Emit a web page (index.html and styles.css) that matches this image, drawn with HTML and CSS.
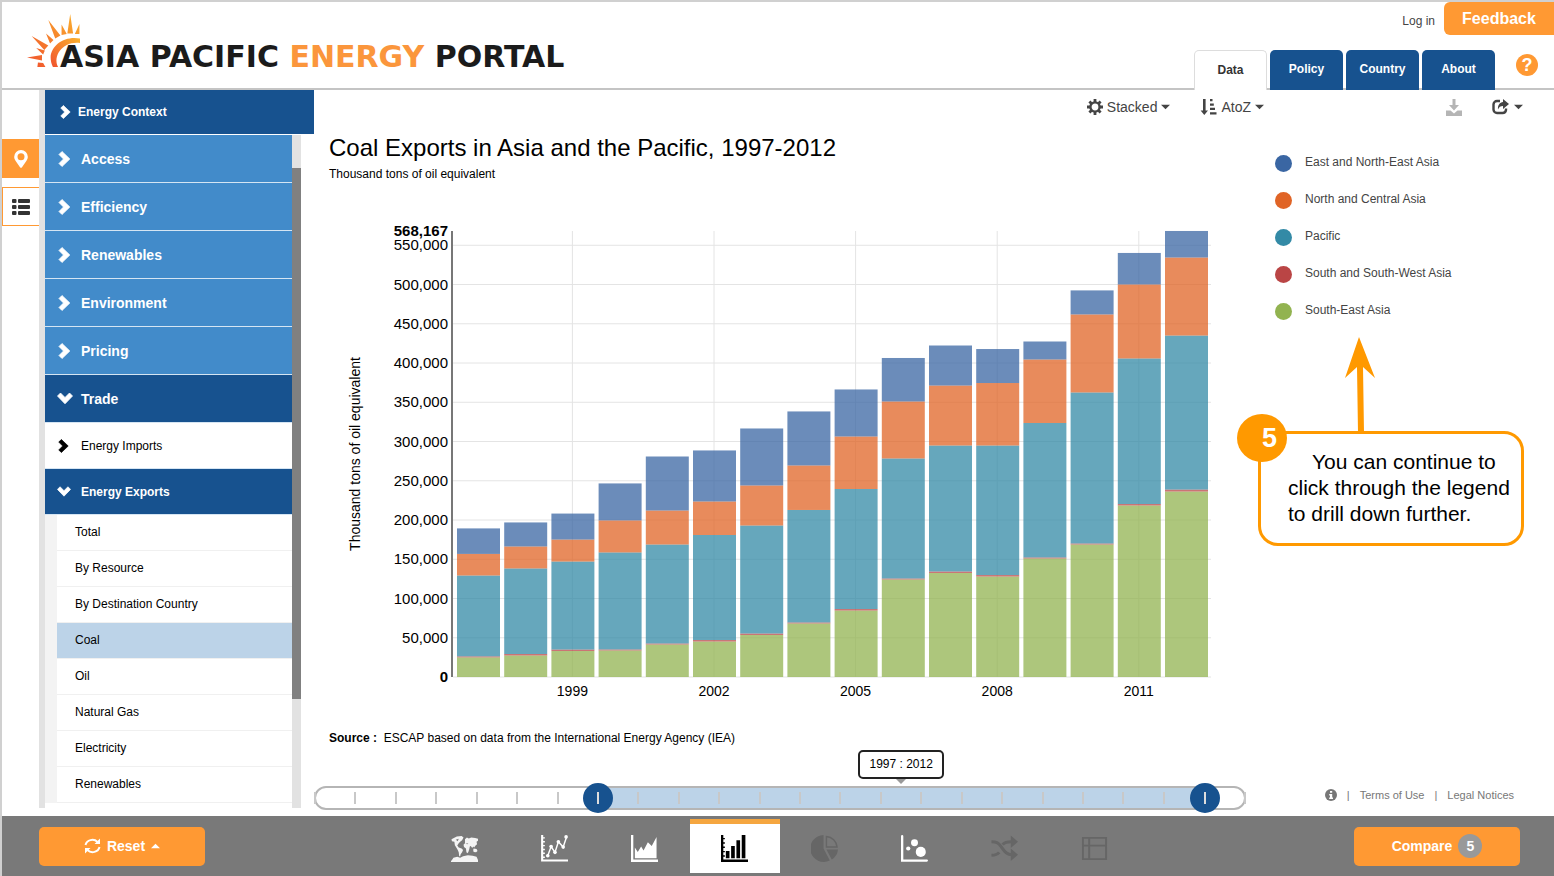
FILE: index.html
```html
<!DOCTYPE html>
<html lang="en">
<head>
    <meta charset="UTF-8">
    <meta name="viewport" content="width=device-width, initial-scale=1.0">
    <title>Asia Pacific Energy Portal</title>
    <link rel="stylesheet" href="styles.css">
</head>
<body>
    <!-- Shared icons -->
    <svg class="sprite" aria-hidden="true">
        <symbol id="chevron" viewBox="0 0 16 16">
            <path d="M2 3.5 5 .5 12.8 8 5 15.5 2 12.5 6.5 8z" fill="currentColor" stroke="currentColor" stroke-width=".8"/>
        </symbol>
        <symbol id="caret" viewBox="0 0 10 6">
            <path d="M0 .5h10L5 5.5z" fill="currentColor"/>
        </symbol>
    </svg>

    <header class="header">
        <a class="logo" href="#">
            <svg class="logo-sun" viewBox="0 0 46 54" preserveAspectRatio="none" aria-hidden="true">
                <defs>
                    <linearGradient id="sun" x1="0" y1="1" x2="1" y2="0">
                        <stop offset="0" stop-color="#f0512d"/>
                        <stop offset="1" stop-color="#fbb22d"/>
                    </linearGradient>
                </defs>
                <g fill="url(#sun)">
                    <path d="M37.500 0 40 19.500h-5zM45.500 10v10L41.500 20zM30 10.500l4.500 9.500-4.500 1zM18.500 6l10.500 15.500-4.500 3zM16.500 19.500 23 26l-3 3.500zM4 22l14.500 9.500-3.500 4.500zM8 34l7.500 2.500-1.500 4zM0 43.500l13-2.500v5.500zM9.500 48.500l4.500.500 2 4H9z"/>
                    <path d="M46 24.500C33 21.500 21 31 20.500 43c0 4 .8 7 2 10h4.500C22 42 31 27 46 29z"/>
                </g>
            </svg>
            <span class="logo-text">ASIA PACIFIC <b>ENERGY</b> PORTAL</span>
        </a>
        <div class="header-right">
            <div class="account">
                <a href="#">Log in</a>
                <button class="feedback">Feedback</button>
            </div>
            <div class="nav-row">
                <nav class="tabs">
                    <a class="active" href="#">Data</a>
                    <a href="#">Policy</a>
                    <a href="#">Country</a>
                    <a href="#">About</a>
                </nav>
                <button class="help" aria-label="Help">?</button>
            </div>
        </div>
    </header>

    <main class="main">
        <div class="rail">
            <button class="rail-btn on" aria-label="Map">
                <svg width="14" height="18" viewBox="0 0 14 18"><path fill="#fff" fill-rule="evenodd" d="M7 0a6.800 6.800 0 0 1 6.800 6.800c0 1.600-.6 2.800-1.300 4L8 17.200c-.5.700-1.500.7-2 0L1.500 10.800C.8 9.600.2 8.400.2 6.800A6.800 6.800 0 0 1 7 0zm0 3.300a3.500 3.500 0 1 0 0 7 3.500 3.500 0 0 0 0-7z"/></svg>
            </button>
            <button class="rail-btn" aria-label="List">
                <svg width="18" height="16" viewBox="0 0 18 16" fill="#333"><rect width="4.500" height="4" rx="1"/><rect x="6" width="12" height="4" rx="1"/><rect y="6" width="4.500" height="4" rx="1"/><rect x="6" y="6" width="12" height="4" rx="1"/><rect y="12" width="4.500" height="4" rx="1"/><rect x="6" y="12" width="12" height="4" rx="1"/></svg>
            </button>
        </div>

        <aside class="sidebar">
            <a class="context" href="#"><svg class="chev"><use href="#chevron"/></svg>Energy Context</a>
            <div class="menu-wrap">
                <nav class="menu">
                    <a class="item" href="#"><svg class="chev"><use href="#chevron"/></svg>Access</a>
                    <a class="item" href="#"><svg class="chev"><use href="#chevron"/></svg>Efficiency</a>
                    <a class="item" href="#"><svg class="chev"><use href="#chevron"/></svg>Renewables</a>
                    <a class="item" href="#"><svg class="chev"><use href="#chevron"/></svg>Environment</a>
                    <a class="item" href="#"><svg class="chev"><use href="#chevron"/></svg>Pricing</a>
                    <a class="item open" href="#"><svg class="chev"><use href="#chevron"/></svg>Trade</a>
                    <a class="item sub" href="#"><svg class="chev"><use href="#chevron"/></svg>Energy Imports</a>
                    <a class="item sub open" href="#"><svg class="chev"><use href="#chevron"/></svg>Energy Exports</a>
                    <ul class="leaves">
                        <li><a href="#">Total</a></li>
                        <li><a href="#">By Resource</a></li>
                        <li><a href="#">By Destination Country</a></li>
                        <li><a class="selected" href="#">Coal</a></li>
                        <li><a href="#">Oil</a></li>
                        <li><a href="#">Natural Gas</a></li>
                        <li><a href="#">Electricity</a></li>
                        <li><a href="#">Renewables</a></li>
                    </ul>
                </nav>
                <div class="scroll"><div class="thumb"></div></div>
            </div>
        </aside>

        <section class="content">
            <div class="toolbar">
                <button class="tool">
                    <svg width="16" height="16" viewBox="0 0 16 16"><circle cx="8" cy="8" r="4.600" fill="none" stroke="#444" stroke-width="2.400"/><path d="M8 0v3M8 13v3M0 8h3M13 8h3M2.400 2.400l2 2M11.600 11.600l2 2M13.600 2.400l-2 2M4.400 11.600l-2 2" stroke="#444" stroke-width="2.800"/></svg>
                    Stacked
                    <svg class="caret"><use href="#caret"/></svg>
                </button>
                <button class="tool sort">
                    <svg width="17" height="16" viewBox="0 0 17 16" fill="#444"><path d="M3 0h2.600v11.500H8L4.300 16 .6 11.500H3zM10 0h2.500v2.300H10zM10 4.400h3.800v2.300H10zM10 8.800h5v2.300h-5zM10 13.200h6.500v2.300H10z"/></svg>
                    AtoZ
                    <svg class="caret"><use href="#caret"/></svg>
                </button>
                <button class="tool" aria-label="Download">
                    <svg width="16" height="17" viewBox="0 0 16 17"><path fill="#b5b5b5" d="M6.500 0h3v6H13l-5 5.500L3 6h3.500zM0 11.500h4.500L8 14.500l3.500-3H16V17H0z"/></svg>
                </button>
                <button class="tool" aria-label="Share">
                    <svg width="18" height="16" viewBox="0 0 18 16"><path d="M8 2H5a3.500 3.500 0 0 0-3.500 3.500v5A3.500 3.500 0 0 0 5 14h5.500a3.500 3.500 0 0 0 3.500-3V9.500" fill="none" stroke="#444" stroke-width="2.400"/><path d="M11 0l6 5-6 5V7C8.500 7 7 8 6 10.500 5.500 6 8 3.300 11 3z" fill="#444"/></svg>
                    <svg class="caret"><use href="#caret"/></svg>
                </button>
            </div>

            <div class="columns">
                <div class="chart-col">
                    <h1>Coal Exports in Asia and the Pacific, 1997-2012</h1>
                    <p class="unit">Thousand tons of oil equivalent</p>
                    <svg class="chart" id="chart" viewBox="0 0 900 490" role="img" aria-label="Coal exports by subregion"></svg>
                    <p class="source"><b>Source :</b>&nbsp; ESCAP based on data from the International Energy Agency (IEA)</p>
                    <div class="slider">
                        <div class="track"><div class="range"></div></div>
                        <div class="ticks" id="ticks"></div>
                        <output class="bubble">1997 : 2012</output>
                        <input type="range" min="1990" max="2013" value="1997" aria-label="From year">
                        <input type="range" min="1990" max="2013" value="2012" aria-label="To year">
                    </div>
                </div>

                <div class="side-col">
                    <ul class="legend">
                        <li><button><i class="dot east"></i>East and North-East Asia</button></li>
                        <li><button><i class="dot north"></i>North and Central Asia</button></li>
                        <li><button><i class="dot pacific"></i>Pacific</button></li>
                        <li><button><i class="dot south"></i>South and South-West Asia</button></li>
                        <li><button><i class="dot southeast"></i>South-East Asia</button></li>
                    </ul>
                    <div class="callout">
                        <svg class="arrow" width="32" height="96" viewBox="0 0 32 96"><path d="M15 0l16 41-12-11 1 66h-6l-1-66L1 41z" fill="#f90"/></svg>
                        <span class="step">5</span>
                        <p>You can continue to click through the legend to drill down further.</p>
                    </div>
                    <div class="links">
                        <svg width="12" height="12" viewBox="0 0 12 12"><circle cx="6" cy="6" r="6" fill="#777"/><path d="M5 2h2.200v1.800H5zM4.200 5h3v3.500H8V10H4.200V8.500H5v-2h-.8z" fill="#fff"/></svg>
                        <span>|</span>
                        <a href="#">Terms of Use</a>
                        <span>|</span>
                        <a href="#">Legal Notices</a>
                    </div>
                </div>
            </div>
        </section>
    </main>

    <footer class="footer">
        <button class="action">
            <svg width="17" height="16" viewBox="0 0 17 16" fill="none" stroke="#fff" stroke-width="2"><path d="M1.500 7A7 6.500 0 0 1 13.500 4M15.500 9A7 6.500 0 0 1 3.500 12"/><path d="M16 .5V6h-5.500zM1 15.500V10h5.500z" fill="#fff" stroke="none"/></svg>
            Reset
            <svg class="caret up"><use href="#caret"/></svg>
        </button>
        <div class="views">
            <button aria-label="Map">
                <svg viewBox="0 0 28 28" fill="#f4f4f4"><path d="M.5 4.500 4 2.500l2-1L11 1l2 1.500-1.500 3L9.500 7 8 8.500 6.500 11l1.500 2 3 1 1.500 1.500-1 2.500-1.500 2-.5 2H8.500L8 18l-1-2.500L5.500 13 4 10.500 3.500 7 1 6.500zM14.500 4.500l2-2 2 1 2.500-1 4 .500 3 1v2l-1.500 1 .5 2.500-1.500 1.500-1.500 2-1-1-1 1.500-1.500-2-1 .5-.500 2.500-1 3L17 19l-1-1-.5-4-2-1.500-.5-2.500 1.500-1.500zM23.500 14l3 .500 1 2-1.500 1.500-2.500-.500-.5-2zM1 26l1.500-2.500 4-1 3 1 3-1.500 5-1 5 .500 4 1L28 26v2H0v-1z"/><path d="M5 5l3-1-1 2.500zM15 9l3-.500-1 1z" fill="#797979"/></svg>
            </button>
            <button aria-label="Line chart">
                <svg viewBox="0 0 28 28" fill="none" stroke="#fff"><path d="M1.200 0v26.500H28" stroke-width="2.200"/><path d="M2 3h2M2 7h2M2 11h2M2 15h2M2 19h2M2 23h2" stroke-width="1.500"/><path d="M7 21.500 10.500 12l4 6L18 7l5 5.500L26.500 2" stroke-width="1.500"/><g fill="#fff" stroke="none"><circle cx="7" cy="21.500" r="1.900"/><circle cx="10.500" cy="12" r="1.900"/><circle cx="14.500" cy="18" r="1.900"/><circle cx="18" cy="7" r="1.900"/><circle cx="23" cy="12.500" r="1.900"/><circle cx="26" cy="2" r="1.900"/></g></svg>
            </button>
            <button aria-label="Area chart">
                <svg viewBox="0 0 28 28" fill="#fff"><path d="M0 0h2.400v25.400H28V28H0z"/><path d="M4 13l3 4.500L10.500 12l2.500 4L17.500 7.500l4 4L26.500 2v22H4z"/></svg>
            </button>
            <button class="active" aria-label="Bar chart">
                <svg viewBox="0 0 28 28"><path d="M0 0h2.400v25.400H28V28H0zM5 16.500h3.800V24H5zM10.500 11.500h3.800V24h-3.800zM16 5.500h3.800V24H16zM21.500 0h3.800v24h-3.800zM2 3h2v1.500H2zM2 7.500h2V9H2zM2 12h2v1.500H2zM2 16.500h2V18H2zM2 21h2v1.500H2z"/></svg>
            </button>
            <button aria-label="Pie chart">
                <svg viewBox="0 0 28 28" fill="#666"><path d="M13 0v14l6.500 12.500A14 14 0 1 1 13 0zM16 15h12a14 14 0 0 1-6.500 10.500z"/><path d="M16 1.500V12.500h11A12 12 0 0 0 16 1.500z" fill="none" stroke="#666" stroke-width="1.500"/></svg>
            </button>
            <button aria-label="Bubble chart">
                <svg viewBox="0 0 28 28" fill="#fff"><path d="M1.200 1.200v25.300h25.600" fill="none" stroke="#fff" stroke-width="2.400" stroke-linecap="round"/><circle cx="14" cy="8" r="3.600"/><circle cx="7.500" cy="14" r="2.200"/><circle cx="20.500" cy="17.500" r="5.200"/></svg>
            </button>
            <button aria-label="Flow chart">
                <svg viewBox="0 0 28 28" fill="none" stroke="#666" stroke-width="3.200"><path d="M.5 7c5 0 7 1 10 5s5 8.500 11.500 8.500M.5 21c3.500 0 6-.5 8-3M12 10c2-2.500 4.500-3 9.500-3"/><path d="M20.500.500 28 7l-7.500 6.500zM20.500 14 28 20.500 20.500 27z" fill="#666" stroke="none"/></svg>
            </button>
            <button aria-label="Table">
                <svg viewBox="0 0 28 28" fill="none" stroke="#666" stroke-width="2"><path d="M2 3h24v22H2zM8.500 3v22M2 11h24"/></svg>
            </button>
        </div>
        <button class="action">Compare <span class="count">5</span></button>
    </footer>

    <script src="chart.js"></script>
</body>
</html>
```
FILE: styles.css
```css
* {
    box-sizing: border-box;
}
body {
    margin: 0;
    height: 100vh;
    display: flex;
    flex-direction: column;
    border-top: 2px solid #d0d0d0;
    border-left: 2px solid #d0d0d0;
    background: #fff;
    color: #000;
    font-family: "Liberation Sans", Arial, sans-serif;
    font-size: 12px;
    overflow: hidden;
}
a {
    color: inherit;
    text-decoration: none;
}
button {
    padding: 0;
    border: 0;
    background: none;
    font: inherit;
    color: inherit;
    cursor: pointer;
}
ul {
    list-style: none;
    margin: 0;
    padding: 0;
}
.sprite {
    position: absolute;
    width: 0;
    height: 0;
}

/* Header */
.header {
    display: flex;
    justify-content: space-between;
    flex: none;
    height: 88px;
    border-bottom: 2px solid #c4c4c4;
}
.logo {
    display: flex;
    align-items: flex-end;
    padding: 0 0 20px 25px;
}
.logo-sun {
    width: 53px;
    height: 54px;
}
.logo-text {
    margin-left: -20px;
    font-family: "DejaVu Sans", sans-serif;
    font-size: 30px;
    font-weight: bold;
    line-height: 22px;
    color: #1b1b1b;
    white-space: nowrap;
}
.logo-text b {
    color: #fb963c;
}
.header-right {
    display: flex;
    flex-direction: column;
    justify-content: space-between;
    align-items: flex-end;
}
.account {
    display: flex;
    align-items: center;
    gap: 9px;
    color: #444;
}
.account a {
    padding-top: 5px;
}
.feedback {
    width: 110px;
    height: 33px;
    border-radius: 6px 0 0 6px;
    background: #ff9933;
    color: #fff;
    font-size: 16px;
    font-weight: bold;
}
.nav-row {
    display: flex;
    align-items: center;
    gap: 21px;
    padding-right: 16px;
    margin-bottom: -2px;
}
.tabs {
    display: flex;
    gap: 3px;
}
.tabs a {
    width: 73px;
    height: 40px;
    line-height: 38px;
    border-radius: 5px 5px 0 0;
    background: #17528f;
    color: #fff;
    font-weight: bold;
    text-align: center;
}
.tabs .active {
    border: 1px solid #ddd;
    border-bottom: 0;
    background: #fff;
    color: #333;
}
.help {
    width: 22px;
    height: 22px;
    margin-bottom: 10px;
    border-radius: 50%;
    background: #ff9933;
    color: #fff;
    font-size: 18px;
    font-weight: bold;
    line-height: 22px;
}

/* Left side */
.main {
    display: flex;
    flex: 1;
    min-height: 0;
}
.rail {
    flex: none;
    display: flex;
    flex-direction: column;
    gap: 9px;
    width: 37px;
    padding-top: 49px;
}
.rail-btn {
    display: flex;
    align-items: center;
    justify-content: center;
    height: 39px;
    border: 1px solid #ff9933;
    border-right: 0;
}
.rail-btn.on {
    background: #ff9933;
}
.sidebar {
    flex: none;
    display: flex;
    flex-direction: column;
    width: 275px;
    margin-bottom: 8px;
    border-left: 6px solid #e2e2e2;
}
.context {
    display: flex;
    align-items: center;
    flex: none;
    height: 44px;
    padding-left: 14px;
    background: #17528f;
    color: #fff;
    font-weight: bold;
}
.chev {
    flex: none;
    width: 14px;
    height: 14px;
    margin-right: 5px;
}
.menu-wrap {
    display: flex;
    flex: 1;
    width: 256px;
    min-height: 0;
    padding-top: 1px;
}
.menu {
    flex: 1;
    overflow: hidden;
}
.item {
    display: flex;
    align-items: center;
    height: 48px;
    padding-left: 12px;
    border-bottom: 1px solid #d5e5f3;
    background: #428bca;
    color: #fff;
    font-size: 14px;
    font-weight: bold;
}
.item .chev {
    width: 16px;
    height: 16px;
    margin-right: 8px;
}
.item.open {
    background: #17528f;
}
.item.open .chev {
    transform: rotate(90deg);
}
.item.sub {
    height: 46px;
    background: #fff;
    color: #000;
    font-size: 12px;
    font-weight: normal;
}
.item.sub.open {
    background: #17528f;
    color: #fff;
    font-weight: bold;
}
.item.sub .chev {
    width: 14px;
    height: 14px;
    margin-right: 10px;
}
.leaves {
    border-left: 12px solid #f3f3f3;
}
.leaves li {
    border-bottom: 1px solid #f0f0f0;
}
.leaves li:last-child {
    margin-bottom: 20px;
}
.leaves a {
    display: block;
    height: 35px;
    padding-left: 18px;
    line-height: 35px;
}
.leaves .selected {
    background: #bcd3e8;
}
.scroll {
    width: 9px;
    padding-top: 33px;
    background: #e2e2e2;
}
.thumb {
    height: 83%;
    background: #808080;
}

/* Content */
.content {
    flex: 1;
    display: flex;
    flex-direction: column;
    min-width: 0;
}
.toolbar {
    display: flex;
    justify-content: flex-end;
    align-items: center;
    gap: 30px;
    height: 34px;
    padding-right: 31px;
    color: #444;
    font-size: 14px;
}
.tool {
    display: flex;
    align-items: center;
    gap: 4px;
}
.sort {
    margin-right: 152px;
}
.caret {
    width: 9px;
    height: 6px;
}
.up {
    transform: rotate(180deg);
}
.columns {
    display: grid;
    grid-template-columns: 1fr 308px;
    flex: 1;
}
h1 {
    margin: 0 15px;
    padding-top: 6px;
    font-size: 24px;
    font-weight: normal;
    line-height: 36px;
}
.unit {
    margin: 0 15px 33px;
    line-height: 16px;
}
.chart {
    display: block;
    width: calc(100% - 32px);
    margin: 0 15px;
    font-size: 15px;
}
.chart .grid {
    stroke: #e4e4e4;
    stroke-width: 1;
}
.chart .axis {
    stroke: #777;
    stroke-width: 2;
}
.chart .y {
    text-anchor: end;
}
.chart .x {
    font-size: 14px;
    text-anchor: middle;
}
.chart .strong {
    font-weight: bold;
}
.chart rect {
    opacity: 0.75;
}
.source {
    margin: 24px 15px 39px;
    line-height: 18px;
}

/* Year slider */
.slider {
    position: relative;
    height: 24px;
}
.track {
    height: 24px;
    border: 2px solid #b5b5b5;
    border-radius: 12px;
    overflow: hidden;
}
.range {
    height: 100%;
    margin: 0 4% 0 30%;
    background: #bcd3e8;
}
.ticks {
    position: absolute;
    inset: 6px 0;
    display: flex;
    justify-content: space-between;
}
.ticks i {
    width: 2px;
    background: #c8c8c8;
}
.slider input {
    position: absolute;
    top: -3px;
    left: -14px;
    width: calc(100% + 28px);
    height: 30px;
    margin: 0;
    background: none;
    -webkit-appearance: none;
    appearance: none;
    pointer-events: none;
}
.slider input::-webkit-slider-thumb {
    -webkit-appearance: none;
    width: 30px;
    height: 30px;
    border-radius: 50%;
    background: linear-gradient(#ddd, #ddd) center / 2px 12px no-repeat #17528f;
    pointer-events: auto;
}
.bubble {
    position: absolute;
    left: 63%;
    bottom: 31px;
    width: 86px;
    height: 29px;
    margin-left: -43px;
    border: 2px solid #222;
    border-radius: 5px;
    background: #fff;
    line-height: 25px;
    text-align: center;
}
.bubble::after {
    content: "";
    position: absolute;
    top: 27px;
    left: 36px;
    border: 5px solid transparent;
    border-top-color: #999;
}

/* Legend and callout */
.side-col {
    display: flex;
    flex-direction: column;
}
.legend {
    padding: 19px 0 0 29px;
}
.legend li {
    height: 37px;
    color: #444;
}
.legend button {
    display: flex;
    align-items: center;
    gap: 13px;
    height: 37px;
}
.dot {
    width: 17px;
    height: 17px;
    margin-top: 4px;
    border-radius: 50%;
}
.east { background: #3a66a3; }
.north { background: #e06426; }
.pacific { background: #338aa6; }
.south { background: #ba4545; }
.southeast { background: #92b350; }
.callout {
    position: relative;
    width: 266px;
    margin: 103px 0 0 12px;
    padding: 15px 0 16px 27px;
    border: 3px solid #f90;
    border-radius: 20px;
    font-size: 21px;
    line-height: 26px;
}
.callout p {
    margin: 0;
    text-indent: 24px;
}
.arrow {
    position: absolute;
    left: 83px;
    top: -97px;
}
.step {
    position: absolute;
    left: -24px;
    top: -20px;
    width: 50px;
    height: 48px;
    padding-left: 15px;
    border-radius: 50%;
    background: #f90;
    color: #fff;
    font-size: 27px;
    font-weight: bold;
    line-height: 48px;
    text-align: center;
}
.links {
    display: flex;
    align-items: center;
    justify-content: flex-end;
    gap: 10px;
    margin: auto 40px 15px 0;
    color: #777;
    font-size: 11px;
}

/* Footer */
.footer {
    display: flex;
    justify-content: space-between;
    align-items: center;
    flex: none;
    height: 60px;
    padding: 0 34px 0 37px;
    background: #797979;
}
.action {
    display: flex;
    align-items: center;
    justify-content: center;
    gap: 6px;
    width: 166px;
    height: 39px;
    border-radius: 5px;
    background: #ff9933;
    color: #fff;
    font-size: 14px;
    font-weight: bold;
}
.views {
    display: flex;
}
.views button {
    display: flex;
    align-items: center;
    justify-content: center;
    width: 90px;
    height: 54px;
    border-top: 5px solid transparent;
}
.views svg {
    width: 27px;
    height: 27px;
}
.views .active {
    border-top-color: #f5a640;
    background: #fff;
}
.count {
    width: 24px;
    height: 24px;
    border-radius: 50%;
    background: #999;
    line-height: 24px;
}
```
FILE: chart.js
```js
// Exports in thousands of ktoe: South-East, South-West, Pacific, North/Central, East
const data = [
    [25, 1.3, 103, 27.5, 32.5],
    [27.4, 1.9, 109, 28, 30.6],
    [33.1, 1.9, 112.1, 28, 33.1],
    [33.8, 1.3, 123.6, 40.8, 47.1],
    [41.4, 1.3, 126.1, 43.3, 68.8],
    [45.2, 1.9, 133.8, 42.7, 65],
    [53.5, 1.9, 137.6, 51, 72.6],
    [68.2, 1.3, 143.3, 56.7, 68.8],
    [84.7, 1.9, 152.9, 66.9, 59.9],
    [124.2, 1.3, 152.9, 72.6, 55.4],
    [132.5, 1.9, 160.5, 76.4, 51],
    [128, 1.9, 165, 79.6, 43.3],
    [151, 1.3, 171.3, 80.9, 22.9],
    [168.8, 1.3, 192.4, 99.4, 30.6],
    [218.5, 1.9, 185.4, 94.3, 40.1],
    [236.3, 2.5, 196.2, 99.4, 33.8]
];
const colors = ['#92b350', '#ba4545', '#338aa6', '#e06426', '#3a66a3'];

const left = 124, right = 882, plotTop = 16, bottom = 462;
const max = 568.167;
const step = 47.2;
const yPos = v => bottom - v / max * (bottom - plotTop);

let out = '';
for (let v = 0; v <= 550; v += 50) {
    const label = v ? v + ',000' : '0';
    out += `<line class="grid" x1="${left}" x2="${right}" y1="${yPos(v)}" y2="${yPos(v)}"/>`;
    out += `<text class="y${v ? '' : ' strong'}" x="119" y="${yPos(v) + 5}">${label}</text>`;
}
out += `<text class="y strong" x="119" y="${plotTop + 5}">568,167</text>`;

data.forEach((row, i) => {
    const x = left + 4 + i * step;
    if (i % 3 === 2) {
        out += `<line class="grid" x1="${x + 21}" x2="${x + 21}" y1="${plotTop}" y2="${bottom}"/>`;
        out += `<text class="x" x="${x + 21}" y="481">${1997 + i}</text>`;
    }
    let sum = 0;
    row.forEach((v, k) => {
        sum += v;
        out += `<rect x="${x}" y="${yPos(sum)}" width="43" height="${v / max * (bottom - plotTop)}" fill="${colors[k]}"/>`;
    });
});
out += `<line class="axis" x1="${left - 1}" x2="${left - 1}" y1="${plotTop}" y2="${bottom}"/>`;
out += `<text class="x" transform="translate(31 239) rotate(-90)">Thousand tons of oil equivalent</text>`;
document.getElementById('chart').innerHTML = out;

// One tick per year, 1990 to 2013
document.getElementById('ticks').innerHTML = '<i></i>'.repeat(24);
```
